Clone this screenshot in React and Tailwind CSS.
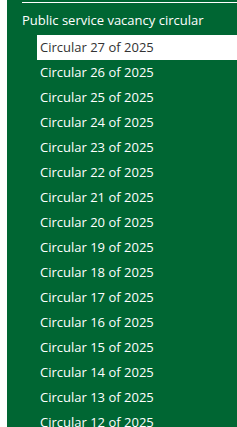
export default function App() {
  const items = [];
  for (let i = 27; i >= 12; i--) items.push(i);
  return (
    <div className="w-[237px] h-[427px] overflow-hidden bg-white flex" style={{ fontFamily: '"Open Sans", "Noto Sans", sans-serif' }}>
      <div className="ml-[7px] flex-1 bg-[#006633] text-white">
        <div className="ml-[15px] mt-[2px] h-px bg-white" />
        <div className="pl-[15px] pt-[8px] h-[32px] text-[13px] leading-[18px]">Public service vacancy circular</div>
        <ul className="pl-[30px]">
          {items.map((n) => (
            <li
              key={n}
              className={
                n === 27
                  ? "h-[25px] flex items-center pl-[3px] text-[13px] bg-white text-[#333]"
                  : "h-[25px] flex items-center pl-[3px] text-[13px]"
              }
            >
              Circular {n} of 2025
            </li>
          ))}
        </ul>
      </div>
    </div>
  );
}
